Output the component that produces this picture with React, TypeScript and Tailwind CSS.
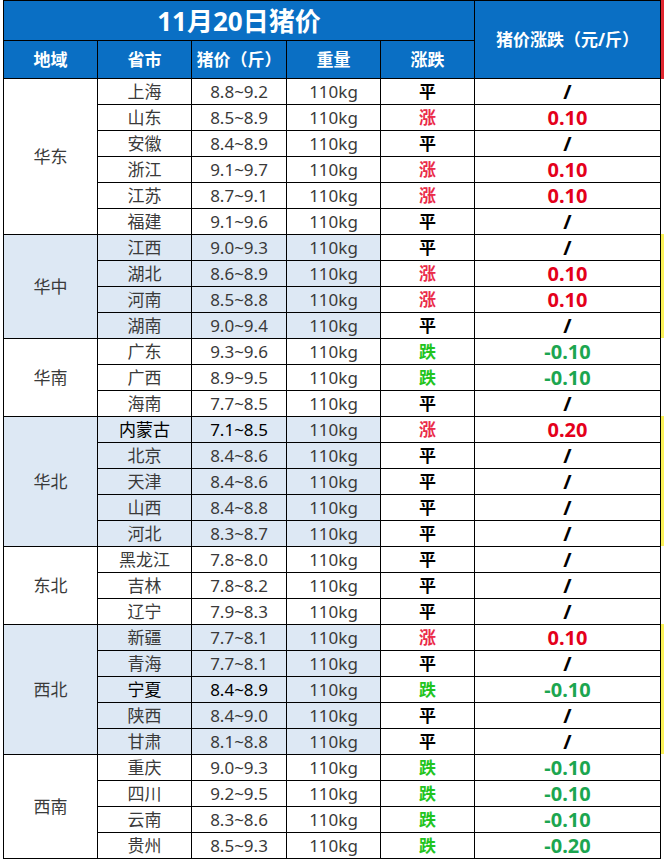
type Row = {
  city: string
  price: string
  trend: "平" | "涨" | "跌"
  diff: string
  dark?: boolean
}

type Group = {
  region: string
  span: string
  tinted: boolean
  rows: Row[]
}

const groups: Group[] = [
  {
    region: "华东",
    span: "row-span-6",
    tinted: false,
    rows: [
      { city: "上海", price: "8.8~9.2", trend: "平", diff: "/" },
      { city: "山东", price: "8.5~8.9", trend: "涨", diff: "0.10" },
      { city: "安徽", price: "8.4~8.9", trend: "平", diff: "/" },
      { city: "浙江", price: "9.1~9.7", trend: "涨", diff: "0.10" },
      { city: "江苏", price: "8.7~9.1", trend: "涨", diff: "0.10" },
      { city: "福建", price: "9.1~9.6", trend: "平", diff: "/" },
    ],
  },
  {
    region: "华中",
    span: "row-span-4",
    tinted: true,
    rows: [
      { city: "江西", price: "9.0~9.3", trend: "平", diff: "/" },
      { city: "湖北", price: "8.6~8.9", trend: "涨", diff: "0.10" },
      { city: "河南", price: "8.5~8.8", trend: "涨", diff: "0.10" },
      { city: "湖南", price: "9.0~9.4", trend: "平", diff: "/" },
    ],
  },
  {
    region: "华南",
    span: "row-span-3",
    tinted: false,
    rows: [
      { city: "广东", price: "9.3~9.6", trend: "跌", diff: "-0.10" },
      { city: "广西", price: "8.9~9.5", trend: "跌", diff: "-0.10" },
      { city: "海南", price: "7.7~8.5", trend: "平", diff: "/" },
    ],
  },
  {
    region: "华北",
    span: "row-span-5",
    tinted: true,
    rows: [
      { city: "内蒙古", price: "7.1~8.5", trend: "涨", diff: "0.20", dark: true },
      { city: "北京", price: "8.4~8.6", trend: "平", diff: "/" },
      { city: "天津", price: "8.4~8.6", trend: "平", diff: "/" },
      { city: "山西", price: "8.4~8.8", trend: "平", diff: "/" },
      { city: "河北", price: "8.3~8.7", trend: "平", diff: "/" },
    ],
  },
  {
    region: "东北",
    span: "row-span-3",
    tinted: false,
    rows: [
      { city: "黑龙江", price: "7.8~8.0", trend: "平", diff: "/" },
      { city: "吉林", price: "7.8~8.2", trend: "平", diff: "/" },
      { city: "辽宁", price: "7.9~8.3", trend: "平", diff: "/" },
    ],
  },
  {
    region: "西北",
    span: "row-span-5",
    tinted: true,
    rows: [
      { city: "新疆", price: "7.7~8.1", trend: "涨", diff: "0.10" },
      { city: "青海", price: "7.7~8.1", trend: "平", diff: "/" },
      { city: "宁夏", price: "8.4~8.9", trend: "跌", diff: "-0.10", dark: true },
      { city: "陕西", price: "8.4~9.0", trend: "平", diff: "/" },
      { city: "甘肃", price: "8.1~8.8", trend: "平", diff: "/" },
    ],
  },
  {
    region: "西南",
    span: "row-span-4",
    tinted: false,
    rows: [
      { city: "重庆", price: "9.0~9.3", trend: "跌", diff: "-0.10" },
      { city: "四川", price: "9.2~9.5", trend: "跌", diff: "-0.10" },
      { city: "云南", price: "8.3~8.6", trend: "跌", diff: "-0.10" },
      { city: "贵州", price: "8.5~9.3", trend: "跌", diff: "-0.20" },
    ],
  },
]

const trendColor = {
  平: "text-black",
  涨: "text-[#ea2c4a]",
  跌: "text-[#22c41e]",
}

const diffColor = {
  平: "text-black",
  涨: "text-[#e4001b]",
  跌: "text-[#1ca650]",
}

export default function App() {
  const font = { fontFamily: '"Noto Sans", "Noto Sans CJK SC", sans-serif' }
  const cell = "flex items-center justify-center leading-none"

  return (
    <div className="flex w-[664px] h-[859px] bg-white" style={font}>
      {/* left gutter */}
      <div className="w-[3px] bg-white" />

      {/* table */}
      <div className="grid grid-cols-[93px_93px_94px_93px_93px_185px] grid-rows-[39px_37px_repeat(30,25px)] gap-px p-px bg-black">
        <div className={`${cell} col-span-5 bg-[#0a6fc4] text-white font-bold text-[26px]`}>
          11月20日猪价
        </div>
        <div className={`${cell} row-span-2 bg-[#0a6fc4] text-white font-bold text-[17px]`}>
          猪价涨跌（元/斤）
        </div>
        {["地域", "省市", "猪价（斤）", "重量", "涨跌"].map((h) => (
          <div key={h} className={`${cell} bg-[#0a6fc4] text-white font-bold text-[17px]`}>
            {h}
          </div>
        ))}

        {groups.map((g) => {
          const tint = g.tinted ? "bg-[#dde8f4]" : "bg-white"
          return [
            <div
              key={g.region}
              className={`${cell} ${g.span} ${tint} text-[#3a3a3a] text-[17px]`}
            >
              {g.region}
            </div>,
            ...g.rows.map((r) => {
              const text = r.dark ? "text-black" : "text-[#3a3a3a]"
              return [
                <div key={r.city + "c"} className={`${cell} ${tint} ${text} text-[17px]`}>
                  {r.city}
                </div>,
                <div key={r.city + "p"} className={`${cell} ${tint} ${text} text-[17px]`}>
                  {r.price}
                </div>,
                <div key={r.city + "w"} className={`${cell} ${tint} text-[#3a3a3a] text-[17px]`}>
                  110kg
                </div>,
                <div
                  key={r.city + "t"}
                  className={`${cell} bg-white font-bold text-[17px] ${trendColor[r.trend]}`}
                >
                  {r.trend}
                </div>,
                <div
                  key={r.city + "d"}
                  className={`${cell} bg-white font-bold text-[20px] ${diffColor[r.trend]}`}
                >
                  {r.diff}
                </div>,
              ]
            }),
          ]
        })}
      </div>

      {/* right gutter */}
      <div className="flex flex-col w-[3px]">
        <div className="h-[79px] bg-[#e0262f]" />
        <div className="h-[155px] bg-white" />
        <div className="h-[104px] bg-[#fbf25a]" />
        <div className="h-[78px] bg-white" />
        <div className="h-[130px] bg-[#fbf25a]" />
        <div className="h-[78px] bg-white" />
        <div className="h-[130px] bg-[#fbf25a]" />
        <div className="flex-1 bg-white" />
      </div>
    </div>
  )
}
